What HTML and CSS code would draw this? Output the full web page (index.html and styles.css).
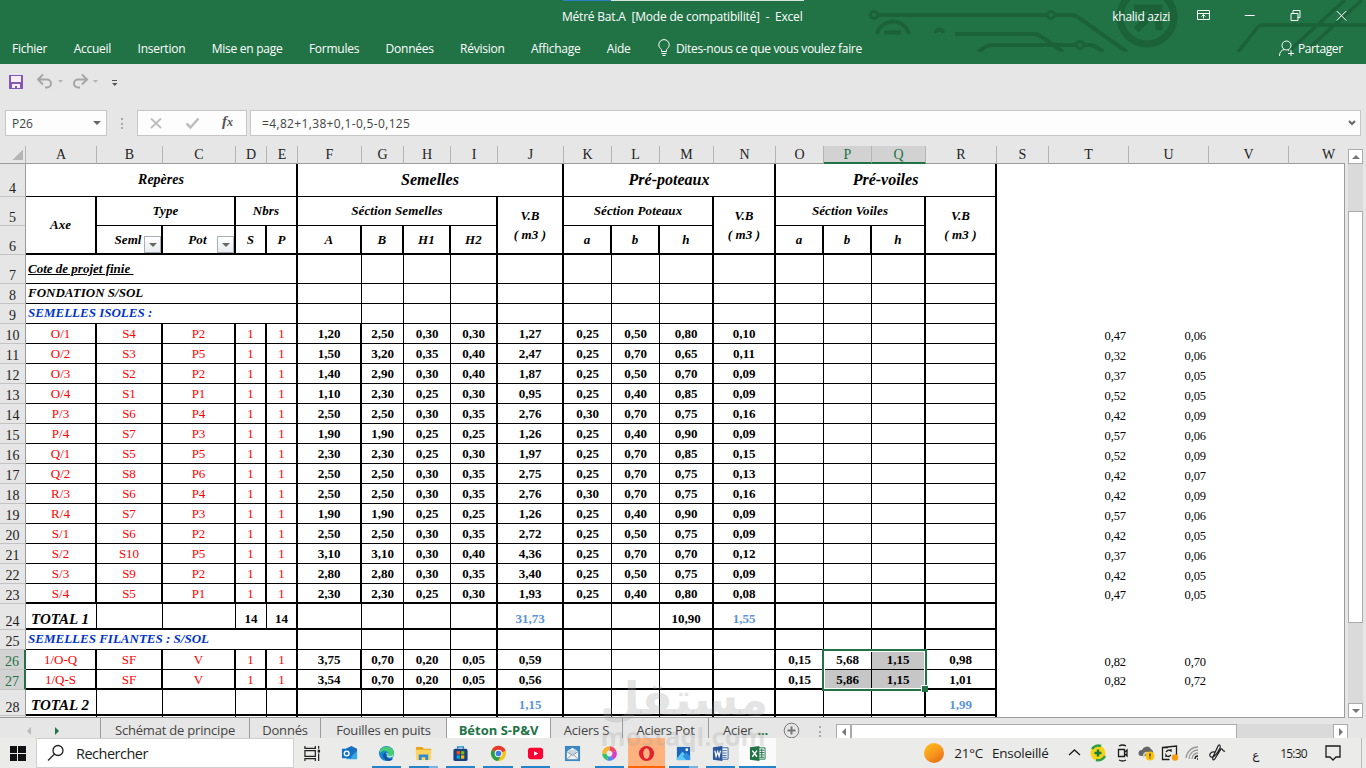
FILE: index.html
```html
<!DOCTYPE html>
<html lang="fr">
<head>
  <meta charset="UTF-8">
  <meta name="viewport" content="width=device-width, initial-scale=1.0">
  <title>Métré Bat.A - Excel</title>
  <link rel="stylesheet" href="styles.css">
</head>
<body>
  <header class="titlebar">
    <svg class="circuit" width="506" height="52" viewBox="0 0 506 52" fill="none" stroke="#1b6239" stroke-width="4">
      <circle cx="14" cy="15" r="3.5" stroke-width="3"/>
      <path d="M18 15H187"/>
      <circle cx="191" cy="15" r="3.5" stroke-width="3"/>
      <path d="M195 15h16q4 0 8 3l48 34"/>
      <path d="M17 34a16.500 16.500 0 0 1 32 0M24 32.500h17"/>
      <path d="M76 33a3.500 3.500 0 0 1 7 0"/>
      <path d="M95 34h79q4 0 8 3l21 15M118 52l7-5q3-2 7-2h84M223 45h7q4 0 8 3l5 4"/>
      <circle cx="220" cy="45" r="3.500" stroke-width="3"/>
      <circle cx="287" cy="17" r="27" stroke-width="7"/>
      <path d="M276 30l22-22" stroke-width="7"/>
      <path d="M274 8h25v22" stroke-width="7"/>
      <path d="M378 52l19-24q2-3 6-3h104M447 50l55-50M430 50l55-50" stroke-width="3.500"/>
    </svg>
    <div class="progress"></div>
    <div class="caption">
      <span class="doc-title">Métré Bat.A&nbsp; [Mode de compatibilité]&nbsp; -&nbsp; Excel</span>
      <span class="user">khalid azizi</span>
      <svg class="win-btns" width="170" height="20" viewBox="0 0 170 20" fill="none" stroke="#fff">
        <path d="M.5 4.500h12v9H.5zM.5 7.500h12M6.500 8.500v4M4.500 10.500l2-2 2 2"/>
        <path d="M48 9.500h10"/>
        <path d="M94.500 7.500h7v7h-7zM96.500 7.500v-3h7v7h-2.500"/>
        <path d="M140.500 5l9.500 9.500M150 5l-9.500 9.500"/>
      </svg>
    </div>
    <nav class="menu">
      <a>Fichier</a><a>Accueil</a><a>Insertion</a><a>Mise en page</a><a>Formules</a>
      <a>Données</a><a>Révision</a><a>Affichage</a><a>Aide</a>
      <span class="tell">
        <svg width="12" height="18" viewBox="0 0 12 18" fill="none" stroke="#fff"><path d="M3.500 12.500v-2C2 9 .8 8 .8 5.800a5.200 5.200 0 0 1 10.400 0C11.200 8 10 9 8.500 10.500v2zM3.500 14.500h5M4.500 16.500h3"/></svg>
        <b>Dites-nous ce que vous voulez faire</b>
      </span>
      <span class="share">
        <svg width="16" height="17" viewBox="0 0 16 17" fill="none" stroke="#fff"><circle cx="7.500" cy="5.500" r="4.500"/><path d="M.5 16c0-4 2-6 5-6.500M9 10l1 .5M12 10v6M9 13.500h6"/></svg>
        <b>Partager</b>
      </span>
    </nav>
  </header>

  <div class="quick">
    <svg width="120" height="18" viewBox="0 0 120 18" fill="none">
      <path d="M1 2h14v14H1z" fill="#8655b8"/><path d="M3 3h10v6H3zM4 11h8v4H9v-2H7v2H4z" fill="#f3eef8"/>
      <path d="M31 6.500h8a4 4 0 0 1 0 8H37M35 1.500l-5 5 5 5" stroke="#a6a6a6" stroke-width="2"/>
      <path d="M50 7h5l-2.500 3z" fill="#b5b5b5"/>
      <path d="M78 6.500h-8a4 4 0 0 0 0 8H72M74 1.500l5 5-5 5" stroke="#a6a6a6" stroke-width="2"/>
      <path d="M85 7h5l-2.500 3z" fill="#b5b5b5"/>
      <path d="M104 7.500h5" stroke="#555"/><path d="M104 10h5.500l-2.750 3z" fill="#555"/>
    </svg>
  </div>

  <div class="formula-bar">
    <div class="box name-box"><span>P26</span><i class="caret"></i></div>
    <div class="dots"></div>
    <div class="box fx-box">
      <svg width="108" height="24" viewBox="0 0 108 24" fill="none">
        <path d="M13 7.500l10 9.500M23 7.500L13 17" stroke="#bdbdbd" stroke-width="1.800"/>
        <path d="M48.500 12.500l4 4 8-9" stroke="#bdbdbd" stroke-width="2.500"/>
      </svg>
      <em>f<small>x</small></em>
    </div>
    <div class="box formula"><span>=4,82+1,38+0,1-0,5-0,125</span>
      <svg width="8" height="6" viewBox="0 0 8 6" fill="none" stroke="#666" stroke-width="2"><path d="M1 1l3 3 3-3"/></svg>
    </div>
  </div>

  <main class="work">
    <div class="sheet">
      <table>
        <colgroup id="cols"></colgroup>
        <thead><tr id="letters"></tr></thead>
        <tbody id="grid">
          <tr class="h33"><th>4</th>
            <td colspan="5" class="k title14">Repères</td><td colspan="5" class="k title">Semelles</td>
            <td colspan="4" class="k title">Pré-poteaux</td><td colspan="4" class="k title">Pré-voiles</td></tr>
          <tr class="h29"><th>5</th>
            <td rowspan="2" class="k b2 head">Axe</td><td colspan="2" class="k head">Type</td><td colspan="2" class="k head">Nbrs</td>
            <td colspan="4" class="k head">Séction Semelles</td><td rowspan="2" class="k b2 head vb">V.B<br>( m3 )</td>
            <td colspan="3" class="k head">Séction Poteaux</td><td rowspan="2" class="k b2 head vb">V.B<br>( m3 )</td>
            <td colspan="3" class="k head">Séction Voiles</td><td rowspan="2" class="k b2 head vb">V.B<br>( m3 )</td></tr>
          <tr class="h29 bottom"><th>6</th>
            <td class="k head filter">Seml<i></i></td><td class="k head filter">Pot<i></i></td><td class="k head">S</td><td class="k head">P</td>
            <td class="k head">A</td><td class="k head">B</td><td class="k head">H1</td><td class="k head">H2</td>
            <td class="k head">a</td><td class="k head">b</td><td class="k head">h</td>
            <td class="k head">a</td><td class="k head">b</td><td class="k head">h</td></tr>
        </tbody>
      </table>
      <div class="selection"></div>
    </div>
    <div class="vscroll">
      <div class="btn up"></div>
      <div class="thumb"></div>
      <div class="btn down"></div>
    </div>
  </main>

  <div class="tabs">
    <div class="tab-nav"><i class="prev"></i><i class="next"></i></div>
    <div class="tab w149">Schémat de principe</div>
    <div class="tab w71">Donnés</div>
    <div class="tab w126">Fouilles en puits</div>
    <div class="tab active">Béton S-P&amp;V</div>
    <div class="tab w72">Aciers S</div>
    <div class="tab w86">Aciers Pot</div>
    <div class="tab last">Acier <b>...</b></div>
    <svg class="add" width="17" height="17" viewBox="0 0 17 17" fill="none" stroke="#777"><circle cx="8.500" cy="8.500" r="7.300"/><path d="M4.500 8.500h8M8.500 4.500v8" stroke-width="2"/></svg>
    <div class="dots"></div>
    <div class="hscroll">
      <div class="btn left"></div>
      <div class="thumb"></div>
      <div class="btn right"></div>
    </div>
  </div>

  <footer class="taskbar">
    <div class="start"><i></i><i></i><i></i><i></i></div>
    <div class="search">
      <svg width="18" height="18" viewBox="0 0 18 18" fill="none" stroke="#222" stroke-width="1.300"><circle cx="11" cy="6.500" r="5"/><path d="M7.500 10L1 16.500"/></svg>
      Rechercher
    </div>
    <div class="apps">
      <div class="app"><svg viewBox="0 0 18 18" fill="none" stroke="#222" stroke-width="1.300"><path d="M1 1v2.500h11V1M1 6h11v6H1zM1 17v-2.500h11V17M15.500 1v3M15.500 9v8"/><path d="M14.500 5h2.500v3h-2.500z" fill="#222" stroke="none"/></svg></div>
      <div class="app"><svg viewBox="0 0 18 18"><path d="M5 4l6-3 6 3v10H5z" fill="#1a6fc0"/><path d="M6 7l5 5 6-6v9H6z" fill="#35a8e8"/><path d="M1 4h10v10H1z" fill="#1172c8"/><circle cx="6" cy="9" r="2.500" fill="none" stroke="#fff" stroke-width="1.500"/></svg></div>
      <div class="app on"><svg viewBox="0 0 18 18"><circle cx="9" cy="9" r="8" fill="#1587cf"/><path d="M2 6A8 8 0 0 1 17 9c0 4-5 5-7 3 3-2 0-6-3-6-2 0-4 1-5 3z" fill="#46cc74"/><path d="M8 8c-4 1-4 7 3 9 3 0 5-2 5-3-4 2-8 0-8-6z" fill="#1354a0"/><path d="M9 9c2 0 2 2 1 3 1 1 4 1 6-1" fill="none" stroke="#fff"/></svg></div>
      <div class="app on many"><svg viewBox="0 0 18 18"><path d="M1 2h7l1 2h8v5H1z" fill="#e8a317"/><path d="M1 5h16v11H1z" fill="#ffd45c"/><path d="M4 16v-6h10v6h-3v-3H7v3z" fill="#2d88d8"/></svg></div>
      <div class="app on"><svg viewBox="0 0 18 18"><path d="M6 4V2h6v2" fill="none" stroke="#2085cf" stroke-width="1.500"/><rect x="1.500" y="4" width="15" height="13" rx="2" fill="#17427d"/><path d="M5 6.500h3.500V10H5z" fill="#f25022"/><path d="M9.500 6.500H13V10H9.500z" fill="#7fba00"/><path d="M5 11h3.500v3.500H5z" fill="#00a4ef"/><path d="M9.500 11H13v3.500H9.500z" fill="#ffb900"/></svg></div>
      <div class="app on"><svg viewBox="0 0 18 18"><circle cx="9" cy="9" r="8" fill="#f5c518"/><path d="M9 9L2 5a8 8 0 0 1 14.500 1z" fill="#e33b2e"/><path d="M9 9L2 5a8 8 0 0 0 6.500 12l3-5z" fill="#2e9e4b"/><circle cx="9" cy="9" r="4" fill="#fff"/><circle cx="9" cy="9" r="3" fill="#3f7de8"/></svg></div>
      <div class="app on"><svg viewBox="0 0 18 18"><rect x="1" y="3" width="16" height="12" rx="3" fill="#ff0033"/><path d="M7.500 6.500l4.500 2.500-4.500 2.500z" fill="#fff"/></svg></div>
      <div class="app"><svg viewBox="0 0 18 18"><path d="M1 1h16v16H1z" fill="#3a87c3"/><path d="M3 7l6-4 6 4v8H3z" fill="#f2f2f2"/><path d="M5 5h8v4l-4 2-4-2z" fill="#cbd7e0"/><path d="M3 7l6 4 6-4M3 15l5-4.500M15 15l-5-4.500" fill="none" stroke="#8a98a5"/></svg></div>
      <div class="app on"><svg viewBox="0 0 18 18" fill="none" stroke-width="4.500"><path d="M9 3.500A5.500 5.500 0 0 1 14 7" stroke="#f0486a"/><path d="M14 7a5.500 5.500 0 0 1-2 6.500" stroke="#d63fc0"/><path d="M12 13.500a5.500 5.500 0 0 1-5 .5" stroke="#4b8bf0"/><path d="M7 14a5.500 5.500 0 0 1-3.500-5" stroke="#35c26a"/><path d="M3.500 9A5.500 5.500 0 0 1 9 3.500" stroke="#f7b52c"/></svg></div>
      <div class="app opera"><svg viewBox="0 0 18 18"><circle cx="9" cy="9" r="8" fill="#e3202e"/><ellipse cx="9" cy="9" rx="3.400" ry="5.500" fill="#ffb27d"/></svg></div>
      <div class="app on many"><svg viewBox="0 0 18 18"><path d="M2 2h14v14H2z" fill="#1b66b8"/><path d="M2 14l6-7 8 9H2z" fill="#5ac8f5"/><path d="M8 12l4-4 4 4v4h-4z" fill="#2f91e0"/><circle cx="12.500" cy="5" r="1.500" fill="#fff"/></svg></div>
      <div class="app on"><svg viewBox="0 0 18 18"><path d="M9 3h8v12H9z" fill="#fff" stroke="#2b579a"/><path d="M11 6h4.500M11 8.500h4.500M11 11h4.500M11 13h4.500" stroke="#2b579a"/><path d="M1 2.500L11 1v16L1 15.500z" fill="#2b579a"/><path d="M3 6l1.300 6L6 7l1.500 5L9 6" fill="none" stroke="#fff" stroke-width="1.300"/></svg></div>
      <div class="app on current"><svg viewBox="0 0 18 18"><path d="M9 3h8v12H9z" fill="#fff" stroke="#217346"/><path d="M11 5.500h5M11 8h5M11 10.500h5M11 13h5M13.500 4v10" stroke="#217346"/><path d="M1 2.500L11 1v16L1 15.500z" fill="#217346"/><path d="M3.500 6l5 6.500M8.500 6l-5 6.500" stroke="#fff" stroke-width="1.500"/></svg></div>
    </div>
    <div class="sun"></div>
    <div class="weather"><span>21°C</span><span>Ensoleillé</span></div>
    <svg class="tray" width="166" height="20" viewBox="0 0 166 20" fill="none" stroke="#1c1c1c" stroke-width="1.300">
      <path d="M1 12l5.500-5 5.500 5"/>
      <circle cx="30" cy="10" r="7.500" fill="#f7d417" stroke="none"/><path d="M24 6a7.500 7.500 0 0 1 9-3M37 13a7.500 7.500 0 0 1-9 4" stroke="#2f9e44" stroke-width="2.500"/><path d="M30 6.500v7M26.500 10h7" stroke="#15803d" stroke-width="2.500"/>
      <path d="M50.500 6.500h6v7h-6zM57 9l2-2v6l-2-2M51 3q3.500-2 7 0M51 17q3.500 2 7 0"/>
      <path d="M73 13a3 3 0 0 1 1-6 5 5 0 0 1 9-1q4 3 1 7z" fill="#666" stroke="none"/><path d="M76 14a3 3 0 0 1 4-4" stroke="#ccc" stroke-width="2"/><circle cx="82" cy="13" r="4.500" fill="#ffc400" stroke="none"/><path d="M82 10.500v3M82 14.500v1"/>
      <path d="M100 4.500h-5.500v12h7M94.500 4.500l14-1.500v9M98 9q2-3 5-1v-2M103 12q-3 3-5 0v2"/><circle cx="107" cy="14.500" r="3.200" fill="#f59a0c" stroke="none"/>
      <path d="M118 15A12 12 0 0 1 130 4M121 16a9 9 0 0 1 9-9M124 16a6 6 0 0 1 6-6" stroke="#999"/><path d="M127 16a3 3 0 0 1 3-3M129 16h1"/>
      <path d="M147 9c-4-1-7 3-4 5 3 1 6-3 9-9 1-3-1-4-2-2l-5 11c-1 4 1 4 3 0l5-8c2-1 1 3 4 2" stroke-width="1.200"/>
    </svg>
    <span class="lang">ع</span>
    <span class="clock">15:30</span>
    <svg class="notif" width="16" height="18" viewBox="0 0 16 18" fill="none" stroke="#1c1c1c" stroke-width="1.300"><path d="M1 2h14v11H11l-3 3-3-3H1z"/></svg>
    <div class="edge"></div>
  </footer>

  <div class="watermark" lang="ar"><span class="wm-ar">مستقل</span><span class="wm-en">mostaql.com</span></div>

  <script src="script.js"></script>
</body>
</html>
```
FILE: styles.css
```css
* {
  box-sizing: border-box;
}

:root {
  --green: #217346;
  --grey: #e6e6e6;
  --line: #9b9b9b;
  --ui: "Open Sans", "Noto Sans", sans-serif;
  --serif: "Liberation Serif", serif;
}

body {
  margin: 0;
  width: 1366px;
  height: 768px;
  overflow: hidden;
  background: var(--grey);
  font-family: var(--ui);
  font-size: 12px;
  position: relative;
}

/* title bar and ribbon tabs */
.titlebar {
  height: 64px;
  background: var(--green);
  color: #fff;
  position: relative;
}

.circuit {
  position: absolute;
  left: 860px;
  top: 0;
}

.progress {
  width: 241px;
  height: 1px;
  margin-left: 563px;
  background: linear-gradient(90deg, #2a7fc4 48px, #d5e3dc 48px);
}

.caption {
  position: relative;
  display: flex;
  height: 31px;
  align-items: center;
  padding-left: 562px;
}

.doc-title {
  width: 553px;
  letter-spacing: -0.21px;
  white-space: nowrap;
}

.user {
  width: 83px;
  letter-spacing: -0.25px;
}

.win-btns {
  margin: 0 0 1px 2px;
}

.menu {
  position: relative;
  display: flex;
  height: 32px;
  align-items: center;
  padding-left: 12px;
  letter-spacing: -0.25px;
  white-space: nowrap;
}

.menu a {
  margin-right: 26.400px;
}

.menu b {
  font-weight: normal;
}

.tell,
.share {
  display: flex;
  align-items: center;
  gap: 6px;
}

.tell {
  margin-left: 1px;
  letter-spacing: -0.32px;
}

.share {
  position: absolute;
  left: 1279px;
  gap: 3px;
  letter-spacing: -0.4px;
}

.quick {
  height: 46px;
  padding: 9px 8px;
}

/* formula bar */
.formula-bar {
  display: flex;
  height: 36px;
  padding-left: 5px;
  color: #444;
}

.box {
  height: 26px;
  border: 1px solid #c6c6c6;
  background: #fdfdfd;
  display: flex;
  align-items: center;
}

.name-box {
  width: 102px;
  padding: 0 5px 0 6px;
  justify-content: space-between;
}

.caret {
  border: 4px solid transparent;
  border-top: 4px solid #666;
  border-bottom: 0;
}

.dots {
  width: 2px;
  height: 11px;
  margin: 8px 14px 0;
  background: repeating-linear-gradient(#aaa 0 2px, transparent 2px 4.500px);
}

.fx-box {
  width: 110px;
  position: relative;
}

.fx-box em {
  position: absolute;
  left: 84px;
  top: 2px;
  font: italic bold 15px var(--serif);
  color: #555;
}

.fx-box small {
  font-size: 12px;
}

.formula {
  width: 1111px;
  margin-left: 3px;
  padding: 0 4px 0 11px;
  justify-content: space-between;
}

.formula span {
  letter-spacing: 0.35px;
}

/* worksheet */
.work {
  display: flex;
  height: 572px;
}

.sheet {
  width: 1345px;
  overflow: hidden;
  position: relative;
  border-bottom: 1px solid var(--line);
  background: linear-gradient(var(--grey) 17px, #fff 17px);
}

.sheet::after {
  content: "";
  position: absolute;
  right: 0;
  top: 17px;
  bottom: 0;
  width: 1px;
  background: var(--line);
}

table {
  width: 1369px;
  table-layout: fixed;
  border-collapse: separate;
  border-spacing: 0;
  font-family: var(--serif);
}

tr {
  height: 20px;
}

.h18 { height: 18px; }
.h26 { height: 26px; }
.h29 { height: 29px; }
.h33 { height: 33px; }

td,
th {
  padding: 0;
  line-height: 16px;
  white-space: nowrap;
  text-align: center;
  overflow: hidden;
}

th {
  background: var(--grey);
  font-weight: normal;
  font-size: 14px;
  border-right: 1px solid var(--line);
  border-bottom: 1px solid #c3c3c3;
  color: #222;
  vertical-align: bottom;
  line-height: 15px;
}

thead th {
  border-right-color: #b5b5b5;
  border-bottom-color: var(--line);
  padding-bottom: 1px;
}

thead th.sel {
  background: #d2d2d2;
  color: var(--green);
  border-bottom: 2px solid var(--green);
  padding-bottom: 0;
}

th.corner {
  background: linear-gradient(135deg, var(--grey) 50%, #b5b5b5 50%) 13px 4px / 10px 10px no-repeat var(--grey);
}

tbody th.sel {
  background: #d2d2d2;
  color: var(--green);
  border-right: 2px solid var(--green);
}

td {
  border-right: 1px solid #000;
  border-bottom: 1px solid #000;
  font-weight: bold;
  font-size: 13px;
}

td.k {
  border-right-width: 2px;
}

td.b2,
.bottom td {
  border-bottom-width: 2px;
}

.bottom td {
  padding-top: 1px;
}

td.out {
  border: 0;
  font-weight: normal;
  font-size: 12.500px;
  letter-spacing: -0.1px;
  text-align: right;
  vertical-align: bottom;
  line-height: 15px;
  padding-right: 3px;
}

.bottom td.out {
  padding-bottom: 1px;
}

.title,
.title14,
.head {
  font-style: italic;
}

.title { font-size: 16px; }
.title14 { font-size: 14px; }

.head {
  letter-spacing: 0.1px;
}

.vb {
  line-height: 19px;
}

.filter {
  position: relative;
  padding-right: 2px;
}

.filter i {
  position: absolute;
  right: 0;
  bottom: 0;
  width: 17px;
  height: 17px;
  border: 1px solid #a9aebb;
  background: linear-gradient(#fff, #e9ebee);
}

.filter i::after {
  content: "";
  position: absolute;
  left: 4px;
  top: 6px;
  border: 4px solid transparent;
  border-top-color: #666;
  border-bottom: 0;
}

.label {
  text-align: left;
  font-style: italic;
  padding-left: 2px;
  padding-bottom: 1px;
}

.blue { color: #0033cc; }
.under { text-decoration: underline; }
.red { color: #ff0000; font-weight: normal; }
.sum { color: #5b93d6; }
.h26 td { padding-top: 5px; }
td.total { font-style: italic; font-size: 15px; padding-right: 2px; }
.grey { background: #c6c6c6; }

.selection {
  position: absolute;
  left: 822px;
  top: 503px;
  width: 105px;
  height: 42px;
  border: 2px solid var(--green);
  box-shadow: inset 0 0 0 1px #fff;
}

.selection::after {
  content: "";
  position: absolute;
  right: -3px;
  bottom: -3px;
  width: 6px;
  height: 6px;
  background: var(--green);
  border: solid #fff;
  border-width: 1px 0 0 1px;
}

/* scrollbars */
.vscroll {
  width: 15px;
  height: 569px;
  margin: 3px 0 0 3px;
  background: #dadada;
  display: flex;
  flex-direction: column;
}

.btn,
.thumb {
  background: #fff;
  border: 1px solid #ababab;
}

.btn {
  width: 15px;
  height: 15px;
  display: grid;
  place-items: center;
}

.btn::after {
  content: "";
  border: 4px solid transparent;
}

.up::after { border-bottom-color: #777; border-top: 0; }
.down::after { border-top-color: #777; border-bottom: 0; }
.left::after { border-right-color: #777; border-left: 0; }
.right::after { border-left-color: #777; border-right: 0; }

.vscroll .thumb {
  height: 412px;
  margin: 47px 0 auto;
}

/* sheet tabs */
.tabs {
  height: 20px;
  display: flex;
  font-size: 13px;
  color: #444;
  overflow: hidden;
}

.tab-nav {
  width: 101px;
  border-right: 1px solid var(--line);
  display: flex;
  align-items: center;
  padding: 5px 0 0 27px;
  gap: 24px;
}

.tab-nav i {
  border: 4px solid transparent;
}

.prev { border-right-color: #bbb !important; border-left: 0 !important; }
.next { border-left-color: var(--green) !important; border-right: 0 !important; }

.tab {
  height: 20px;
  line-height: 25px;
  text-align: center;
  white-space: nowrap;
  border-right: 1px solid var(--line);
  letter-spacing: -0.2px;
}

.w149 { width: 149px; }
.w71 { width: 71px; }
.w126 { width: 126px; }
.w72 { width: 72px; }
.w86 { width: 86px; }

.active {
  width: 104px;
  background: #fff;
  color: var(--green);
  font-weight: bold;
  letter-spacing: 0;
}

.last {
  width: 74px;
  border: 0;
  text-align: left;
  padding-left: 14px;
}

.last b {
  color: var(--green);
  margin-left: 2px;
}

.add {
  margin-top: 4px;
}

.tabs .dots {
  margin: 8px 15px 0 19px;
}

.hscroll {
  display: flex;
  margin-top: 6px;
  width: 512px;
  background: #dadada;
}

.hscroll .thumb {
  width: 386px;
  height: 16px;
  margin-right: auto;
}

/* windows taskbar */
.taskbar {
  height: 30px;
  background: #ebebea;
  display: flex;
  align-items: center;
  color: #1c1c1c;
  position: relative;
}

.start {
  display: grid;
  grid-template-columns: 7px 8px;
  gap: 1px;
  width: 26px;
  padding-left: 10px;
  box-sizing: content-box;
}

.start i {
  height: 7px;
  background: #111;
}

.search {
  width: 258px;
  height: 30px;
  background: #fff;
  border: 1px solid #cfcfcf;
  display: flex;
  align-items: center;
  gap: 11px;
  padding-left: 10px;
  font-size: 14.500px;
  letter-spacing: -0.5px;
}

.apps {
  display: flex;
}

.app {
  width: 37.100px;
  height: 30px;
  display: flex;
  justify-content: center;
  align-items: center;
  position: relative;
}

.app svg {
  width: 17px;
  height: 17px;
}

.on::after,
.opera::after {
  content: "";
  position: absolute;
  left: 4px;
  right: 4px;
  bottom: 0;
  height: 2px;
  background: #2583c9;
}

.many::after {
  background: linear-gradient(90deg, #2583c9 20px, #78b2de 20px);
}

.opera {
  background: #ffb27d;
}

.opera::after {
  left: 0;
  right: 0;
  background: #ff6600;
}

.current {
  background: #fafafa;
}

.current::after {
  left: 0;
  right: 0;
}

.sun {
  width: 20px;
  height: 20px;
  border-radius: 50%;
  margin-left: 148px;
  background: linear-gradient(145deg, #ffc21a, #f7941e 55%, #dd6410);
}

.weather {
  display: flex;
  gap: 9px;
  width: 114px;
  margin-left: 10px;
  font-size: 13.500px;
  letter-spacing: -0.25px;
}

.lang {
  width: 9px;
  margin: 4px 19px 0 18px;
  font: 12px "DejaVu Sans", sans-serif;
}

.clock {
  width: 45px;
  font-size: 12px;
  letter-spacing: -0.8px;
}

.edge {
  width: 1px;
  height: 30px;
  background: #bbb;
  margin-left: 20px;
}

/* site mark laid over the window */
.watermark {
  position: absolute;
  left: 600px;
  top: 670px;
  width: 170px;
  height: 85px;
  color: rgba(160, 160, 160, 0.3);
  font-weight: bold;
  text-align: center;
}

.wm-ar,
.wm-en {
  position: absolute;
  left: 0;
  width: 166px;
  white-space: nowrap;
}

.wm-ar {
  top: -4px;
  font: bold 46px/66px "DejaVu Sans", sans-serif;
}

.wm-en {
  top: 51px;
  font: bold 25.500px/30px "Open Sans", sans-serif;
  color: rgba(160, 160, 160, 0.25);
}
```
FILE: script.js
```js
const widths = [26, 71, 66, 73, 31, 31, 64, 42, 47, 47, 66, 48, 48, 54, 62, 48, 48, 54, 71, 52, 80, 80, 80, 80];
const letters = "ABCDEFGHIJKLMNOPQRSTUVW";
const alwaysThick = "EIJMNQR";

// one row per line: number, cells A to J, K to N, then T and U
const footings = `
10 O/1 S4 P2 1 1 1,20 2,50 0,30 0,30 1,27 0,25 0,50 0,80 0,10 0,47 0,06
11 O/2 S3 P5 1 1 1,50 3,20 0,35 0,40 2,47 0,25 0,70 0,65 0,11 0,32 0,06
12 O/3 S2 P2 1 1 1,40 2,90 0,30 0,40 1,87 0,25 0,50 0,70 0,09 0,37 0,05
13 O/4 S1 P1 1 1 1,10 2,30 0,25 0,30 0,95 0,25 0,40 0,85 0,09 0,52 0,05
14 P/3 S6 P4 1 1 2,50 2,50 0,30 0,35 2,76 0,30 0,70 0,75 0,16 0,42 0,09
15 P/4 S7 P3 1 1 1,90 1,90 0,25 0,25 1,26 0,25 0,40 0,90 0,09 0,57 0,06
16 Q/1 S5 P5 1 1 2,30 2,30 0,25 0,30 1,97 0,25 0,70 0,85 0,15 0,52 0,09
17 Q/2 S8 P6 1 1 2,50 2,50 0,30 0,35 2,75 0,25 0,70 0,75 0,13 0,42 0,07
18 R/3 S6 P4 1 1 2,50 2,50 0,30 0,35 2,76 0,30 0,70 0,75 0,16 0,42 0,09
19 R/4 S7 P3 1 1 1,90 1,90 0,25 0,25 1,26 0,25 0,40 0,90 0,09 0,57 0,06
20 S/1 S6 P2 1 1 2,50 2,50 0,30 0,35 2,72 0,25 0,50 0,75 0,09 0,42 0,05
21 S/2 S10 P5 1 1 3,10 3,10 0,30 0,40 4,36 0,25 0,70 0,70 0,12 0,37 0,06
22 S/3 S9 P2 1 1 2,80 2,80 0,30 0,35 3,40 0,25 0,50 0,75 0,09 0,42 0,05
23 S/4 S5 P1 1 1 2,30 2,30 0,25 0,30 1,93 0,25 0,40 0,80 0,08 0,47 0,05`;

const grid = document.getElementById("grid");
document.getElementById("cols").innerHTML = widths.map(w => `<col style="width:${w}px">`).join("");

const head = document.getElementById("letters");
head.className = "h18";
head.innerHTML = '<th class="corner"></th>' + [...letters].map(l =>
  `<th class="${"PQ".includes(l) ? "sel" : ""}">${l}</th>`).join("");

function addRow(num, values, options = {}) {
  const tr = document.createElement("tr");
  tr.className = options.cls || "";
  let html = `<th class="${num == 26 || num == 27 ? "sel" : ""}">${num}</th>`;
  let start = 0;
  if (options.label) {
    html += `<td colspan="5" class="k label ${options.labelCls || ""}">${options.label}</td>`;
    start = 5;
  }
  for (const col of letters.slice(start)) {
    const cls = [];
    if (col > "R") cls.push("out");
    else if (alwaysThick.includes(col) || (options.data && "ABCDF".includes(col))) cls.push("k");
    if (options.data && col < "F") cls.push("red");
    if (options.cellCls && options.cellCls[col]) cls.push(options.cellCls[col]);
    html += `<td class="${cls.join(" ")}">${values[col] || ""}</td>`;
  }
  tr.innerHTML = html;
  grid.appendChild(tr);
}

function toCells(list, cols) {
  const cells = {};
  [...cols].forEach((c, i) => cells[c] = list[i]);
  return cells;
}

addRow(7, {}, { label: "Cote de projet finie&nbsp;", labelCls: "under", cls: "h29" });
addRow(8, {}, { label: "FONDATION S/SOL" });
addRow(9, {}, { label: "SEMELLES ISOLES :", labelCls: "blue" });

footings.trim().split("\n").forEach(line => {
  const [num, ...rest] = line.split(" ");
  addRow(num, toCells(rest, "ABCDEFGHIJKLMNTU"), { data: true, cls: num == 23 ? "bottom" : "" });
});

addRow(24, { A: "TOTAL 1", D: "14", E: "14", J: "31,73", M: "10,90", N: "1,55" },
  { cls: "h26 bottom", cellCls: { A: "total", J: "sum", N: "sum" } });
addRow(25, {}, { label: "SEMELLES FILANTES : S/SOL", labelCls: "blue" });
addRow(26, toCells("1/O-Q SF V 1 1 3,75 0,70 0,20 0,05 0,59 0,15 5,68 1,15 0,98 0,82 0,70".split(" "), "ABCDEFGHIJOPQRTU"),
  { data: true, cellCls: { Q: "grey" } });
addRow(27, toCells("1/Q-S SF V 1 1 3,54 0,70 0,20 0,05 0,56 0,15 5,86 1,15 1,01 0,82 0,72".split(" "), "ABCDEFGHIJOPQRTU"),
  { data: true, cls: "bottom", cellCls: { P: "grey", Q: "grey" } });
addRow(28, { A: "TOTAL 2", J: "1,15", R: "1,99" },
  { cls: "h26 bottom", cellCls: { A: "total", J: "sum", R: "sum" } });
addRow("", {});
```
